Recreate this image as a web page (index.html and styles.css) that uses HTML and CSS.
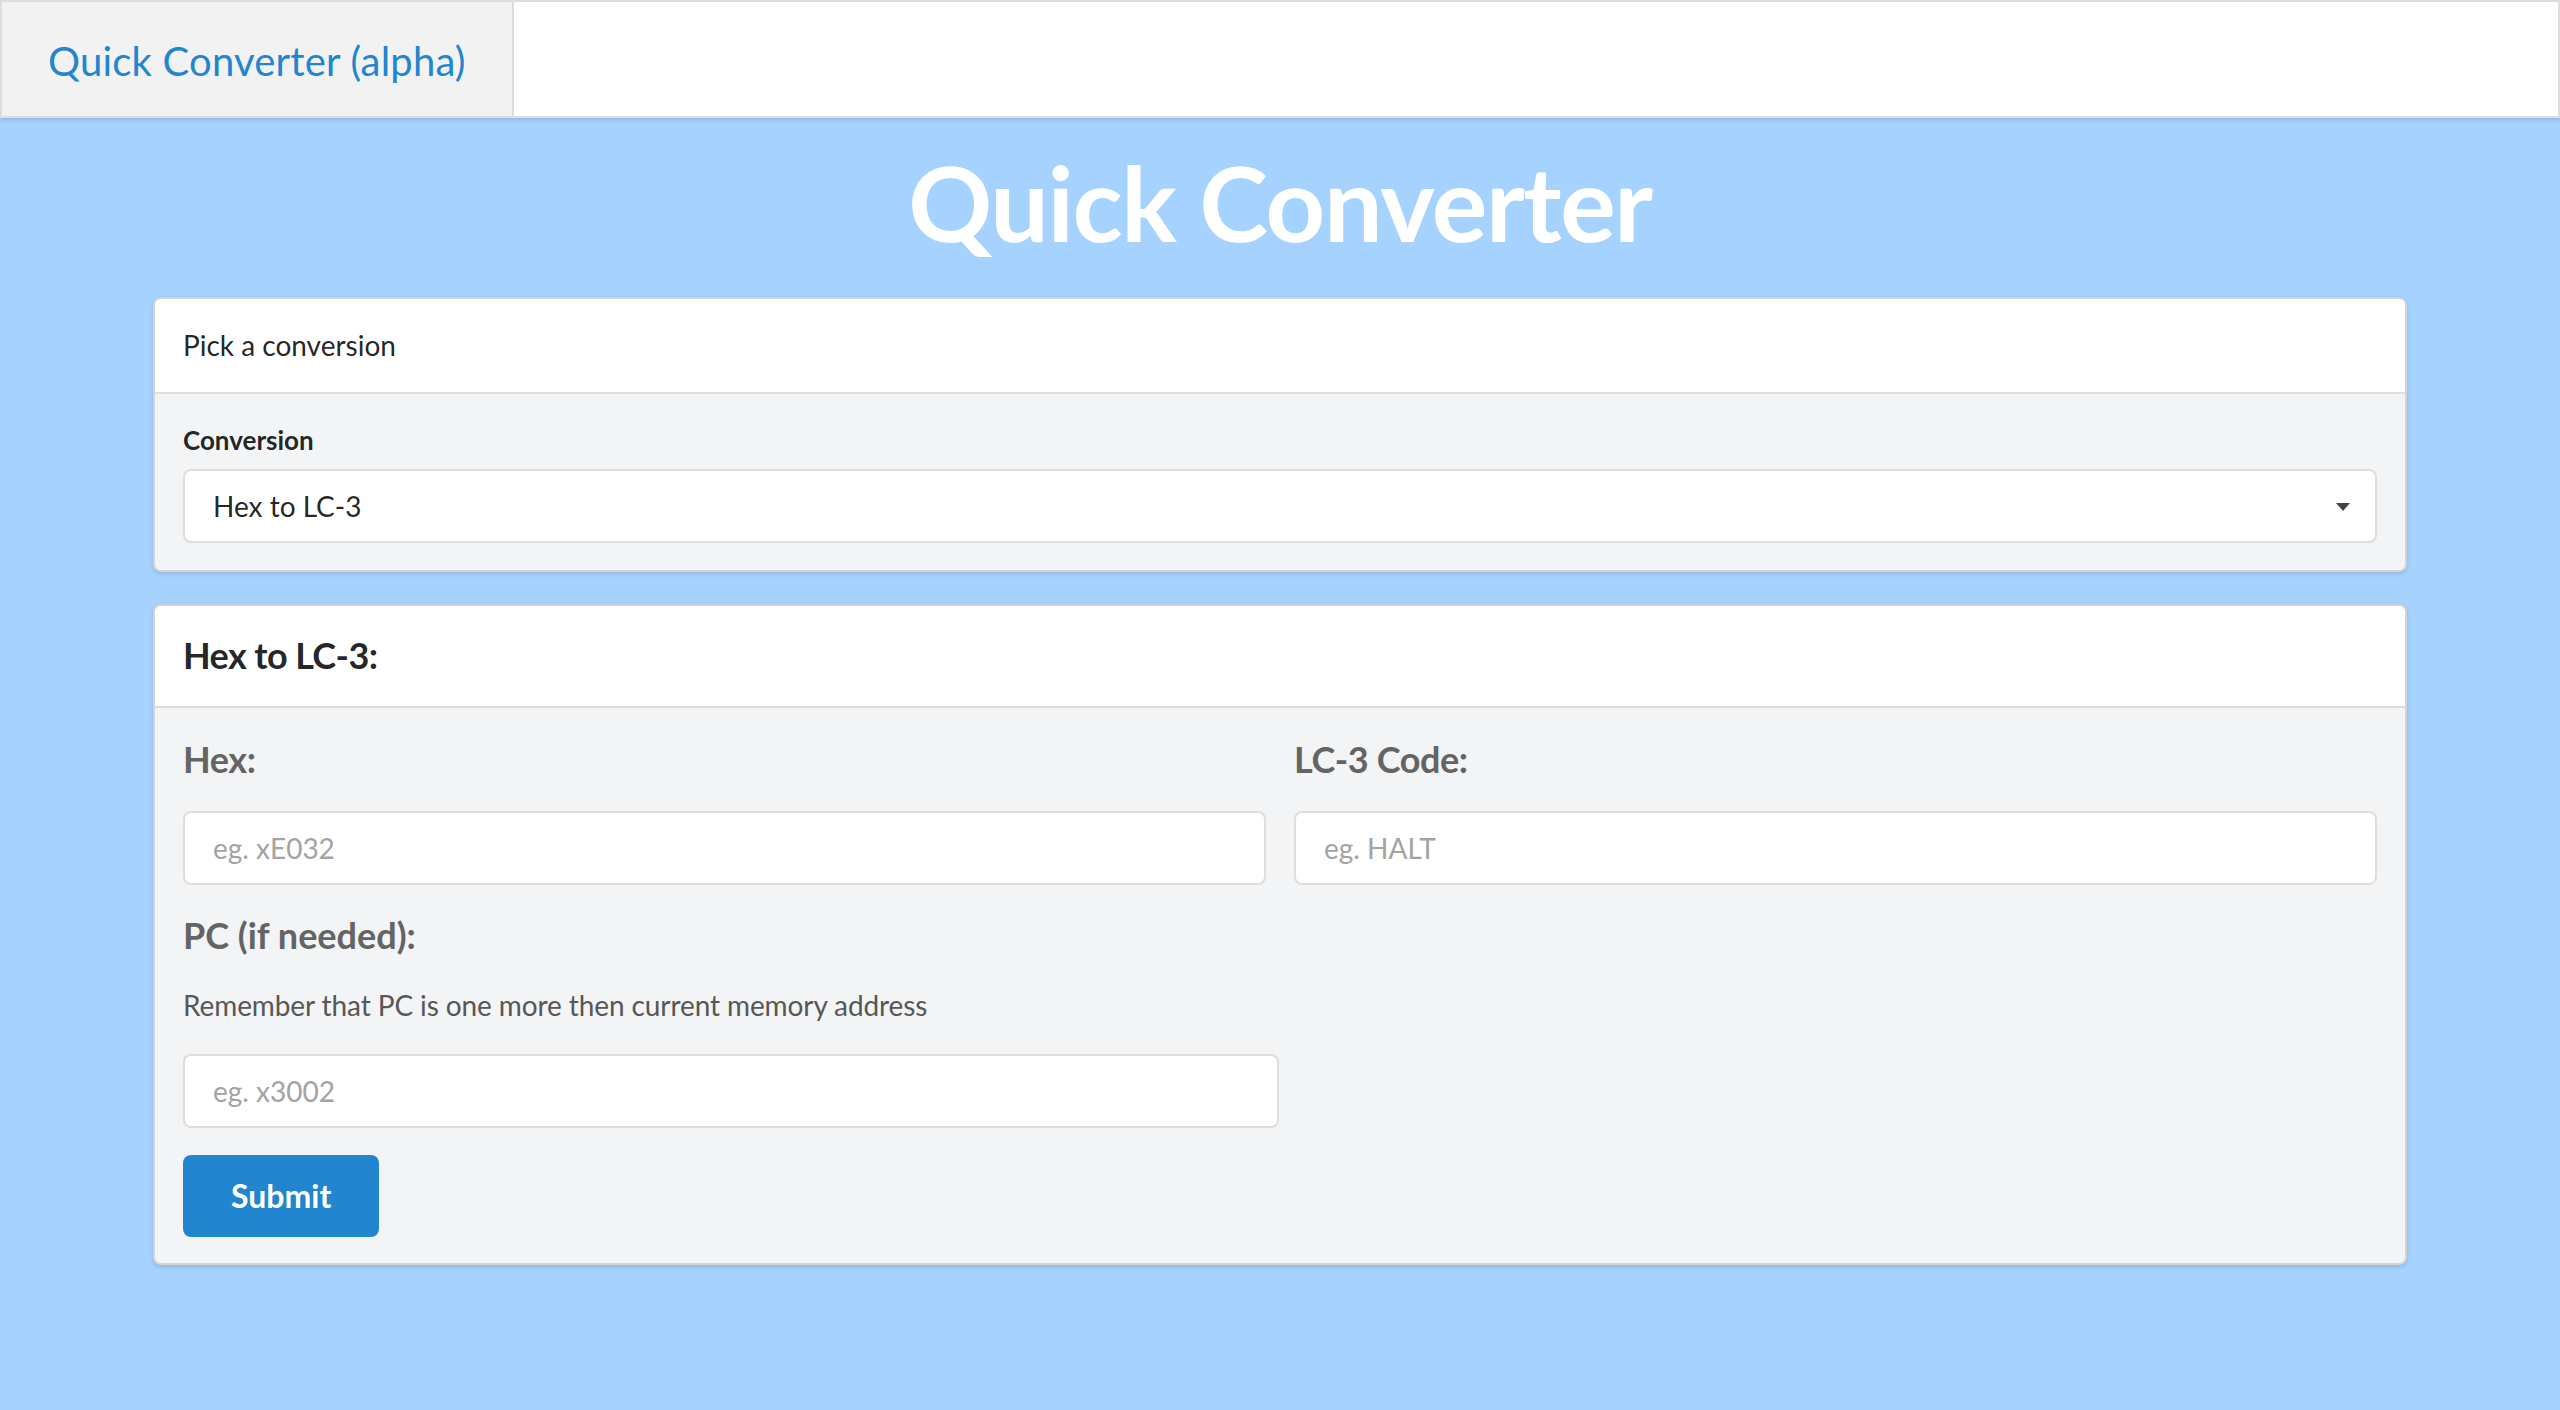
FILE: index.html
```html
<!DOCTYPE html>
<html lang="en">
<head>
<meta charset="utf-8">
<title>Quick Converter</title>
<link rel="stylesheet" href="styles.css">
</head>
<body>
<nav class="navbar">
  <a class="brand" href="#">Quick Converter (alpha)</a>
</nav>
<main class="page">
  <h1 class="title">Quick Converter</h1>

  <section class="card">
    <div class="card-header">Pick a conversion</div>
    <div class="card-body card-body--pick">
      <label class="field-label">Conversion</label>
      <div class="select">
        <span class="select-text">Hex to LC-3</span>
        <span class="select-arrow"></span>
      </div>
    </div>
  </section>

  <section class="card card--second">
    <div class="card-header card-header--title"><h3 class="card-title">Hex to LC-3:</h3></div>
    <div class="card-body">
      <div class="two-fields">
        <div class="field">
          <h3 class="label label--tight">Hex:</h3>
          <input class="input" type="text" placeholder="eg. xE032">
        </div>
        <div class="field">
          <h3 class="label label--tight">LC-3 Code:</h3>
          <input class="input" type="text" placeholder="eg. HALT">
        </div>
      </div>
      <div class="field field--half">
        <h3 class="label">PC (if needed):</h3>
        <p class="help">Remember that PC is one more then current memory address</p>
        <input class="input" type="text" placeholder="eg. x3002">
      </div>
      <button class="button" type="button">Submit</button>
    </div>
  </section>
</main>
</body>
</html>
```

FILE: styles.css
```css
* { box-sizing: border-box; }

html, body {
  margin: 0;
  padding: 0;
}

body {
  background: #a5d2ff;
  font-family: Lato, "Open Sans", "Liberation Sans", sans-serif;
  font-size: 28px;
  line-height: 40px;
  color: rgba(0, 0, 0, 0.87);
  min-height: 1410px;
}

.navbar {
  display: flex;
  height: 118px;
  background: #ffffff;
  border: 2px solid #dedede;
  box-shadow: 0 2px 4px 0 rgba(34, 36, 38, 0.15);
}

.brand {
  display: flex;
  align-items: center;
  padding: 4px 46px 0;
  background: #f2f2f2;
  border-right: 2px solid #dcdcdc;
  color: #2185d0;
  font-size: 40px;
  line-height: 40px;
  letter-spacing: 0.2px;
  text-decoration: none;
}

.page {
  width: 2254px;
  margin: 0 auto;
  padding-top: 17px;
}

.title {
  margin: 0 0 28px;
  font-size: 104px;
  line-height: 134px;
  font-weight: 700;
  letter-spacing: -1.4px;
  color: #ffffff;
  text-align: center;
}

.card {
  border: 2px solid rgba(34, 36, 38, 0.15);
  border-radius: 8px;
  box-shadow: 0 2px 4px 0 rgba(34, 36, 38, 0.15);
  overflow: hidden;
  background: #f3f4f5;
}

.card--second {
  margin-top: 32px;
}

.card-header {
  background: #ffffff;
  padding: 26px 28px 27px;
  border-bottom: 2px solid rgba(34, 36, 38, 0.15);
}

.card-header--title {
  padding: 26px 28px 28px;
}

.card-title {
  margin: 0;
  font-size: 36px;
  line-height: 46px;
  font-weight: 700;
  letter-spacing: -0.6px;
  color: rgba(0, 0, 0, 0.87);
}

.card-body {
  background: #f3f4f5;
  padding: 28px 28px 26px;
}

.card-body--pick {
  padding: 30px 28px 27px;
}

.field-label {
  display: block;
  font-size: 26px;
  line-height: 33px;
  font-weight: 700;
  margin-bottom: 12px;
  color: rgba(0, 0, 0, 0.87);
}

.select {
  display: flex;
  align-items: center;
  justify-content: space-between;
  height: 74px;
  padding: 0 25px 0 28px;
  background: #ffffff;
  border: 2px solid rgba(34, 36, 38, 0.15);
  border-radius: 8px;
}

.select-text {
  font-size: 28px;
  line-height: 40px;
  color: rgba(0, 0, 0, 0.87);
}

.select-arrow {
  width: 0;
  height: 0;
  border-left: 7px solid transparent;
  border-right: 7px solid transparent;
  border-top: 8px solid #444444;
  margin-top: 2px;
}

.two-fields {
  display: grid;
  grid-template-columns: 1fr 1fr;
  column-gap: 28px;
  margin-bottom: 27px;
}

.field {
  display: flex;
  flex-direction: column;
}

.field--half {
  width: 1096px;
  margin-bottom: 27px;
}

.label {
  margin: 0 0 29px;
  font-size: 36px;
  line-height: 46px;
  font-weight: 700;
  color: #646464;
}

.label--tight {
  letter-spacing: -0.4px;
}

.help {
  margin: -2px 0 29px;
  font-size: 28px;
  line-height: 40px;
  letter-spacing: -0.1px;
  color: #575757;
}

.input {
  display: block;
  width: 100%;
  height: 74px;
  margin: 0;
  padding: 0 28px;
  background: #ffffff;
  border: 2px solid rgba(34, 36, 38, 0.15);
  border-radius: 8px;
  font-family: Lato, "Open Sans", "Liberation Sans", sans-serif;
  font-size: 28px;
  color: rgba(0, 0, 0, 0.87);
  outline: none;
}

.input::placeholder {
  color: #a3a3a3;
  opacity: 1;
}

.button {
  display: block;
  height: 82px;
  padding: 0 48px;
  margin: 0;
  background: #2185d0;
  color: #ffffff;
  border: none;
  border-radius: 8px;
  font-family: Lato, "Open Sans", "Liberation Sans", sans-serif;
  font-size: 32px;
  font-weight: 700;
  line-height: 32px;
  cursor: pointer;
}
```
